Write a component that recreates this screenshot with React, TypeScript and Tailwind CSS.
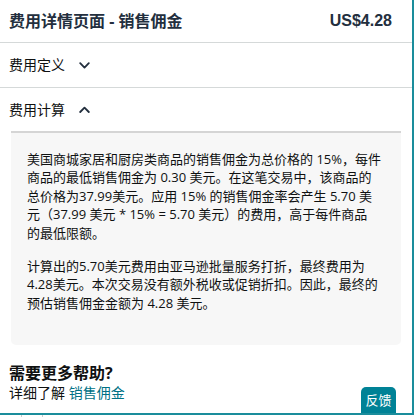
import React from "react";

const cjk = { fontFamily: '"Open Sans", "Noto Sans CJK SC", sans-serif' };

function Chevron({ up }: { up?: boolean }) {
  return (
    <svg width="11" height="7" viewBox="0 0 11 7" className="ml-[14px]" fill="none">
      {up ? (
        <path d="M1.2 6 L5.5 1.6 L9.8 6" stroke="#232f3e" strokeWidth="1.8" strokeLinecap="round" strokeLinejoin="round" />
      ) : (
        <path d="M1.2 1.2 L5.5 5.6 L9.8 1.2" stroke="#232f3e" strokeWidth="1.8" strokeLinecap="round" strokeLinejoin="round" />
      )}
    </svg>
  );
}

export default function App() {
  const p1 = [
    "美国商城家居和厨房类商品的销售佣金为总价格的 15%，每件",
    "商品的最低销售佣金为 0.30 美元。在这笔交易中，该商品的",
    "总价格为37.99美元。应用 15% 的销售佣金率会产生 5.70 美",
    "元（37.99 美元 * 15% = 5.70 美元）的费用，高于每件商品",
    "的最低限额。",
  ];
  const p2 = [
    "计算出的5.70美元费用由亚马逊批量服务打折，最终费用为",
    "4.28美元。本次交易没有额外税收或促销折扣。因此，最终的",
    "预估销售佣金金额为 4.28 美元。",
  ];
  return (
    <div className="w-[414px] h-[417px] bg-white overflow-hidden" style={cjk}>
      <div className="relative w-[414px] h-[415px] border-r-2 border-b-2 border-[#1a8d9c] flex flex-col">
        <div className="h-[42px] flex items-center justify-between pl-[9px] pr-[20px] shrink-0">
          <span className="text-[16px] font-bold text-[#232f3e] leading-none">费用详情页面 - 销售佣金</span>
          <span
            className="text-[16px] font-bold text-[#232f3e] leading-none"
            style={{ fontFamily: '"Liberation Sans", Arial, sans-serif' }}
          >
            US$4.28
          </span>
        </div>
        <div className="h-px bg-[#d5d9d9] shrink-0" />
        <div className="h-[44px] flex items-center pl-[9px] shrink-0">
          <span className="text-[14px] text-[#0f1111] leading-none">费用定义</span>
          <Chevron />
        </div>
        <div className="h-px bg-[#d5d9d9] shrink-0" />
        <div className="h-[43px] flex items-center pl-[9px] shrink-0">
          <span className="text-[14px] text-[#0f1111] leading-none">费用计算</span>
          <Chevron up />
        </div>
        <div className="mx-[11px] border-t-2 border-[#d5d5d5] bg-[#f7f7f7] rounded-b-[5px] pl-[16px] pr-[6px] pt-[17px] pb-[33px] text-[13px] leading-[18.4px] text-[#0f1111] shrink-0">
          <div>
            {p1.map((l) => (
              <div key={l} className="whitespace-nowrap">{l}</div>
            ))}
          </div>
          <div className="mt-[15px]">
            {p2.map((l) => (
              <div key={l} className="whitespace-nowrap">{l}</div>
            ))}
          </div>
        </div>
        <div className="pl-[9px] mt-[19px]">
          <div className="text-[16px] font-bold text-[#0f1111] leading-[19px]">需要更多帮助?</div>
          <div className="text-[14px] text-[#0f1111] leading-[18px] mt-[1px]">
            详细了解 <span className="text-[#007185]">销售佣金</span>
          </div>
        </div>
        <div className="absolute left-[361px] bottom-0 w-[35px] h-[26px] bg-[#008296] rounded-t-[5px] flex items-center justify-center text-white text-[13px] leading-none">
          反馈
        </div>
      </div>
      <div className="relative h-[2px]">
        <div className="absolute left-[21px] top-0 w-px h-[2px] bg-[#cccccc]" />
        <div className="absolute left-[42px] top-0 w-px h-[2px] bg-[#cccccc]" />
      </div>
    </div>
  );
}
